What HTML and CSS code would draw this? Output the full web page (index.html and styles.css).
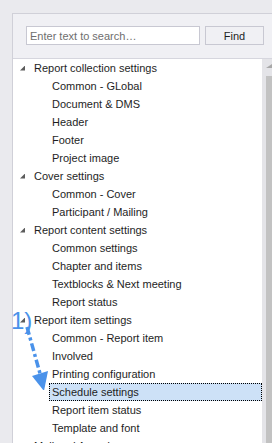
FILE: index.html
```html
<!DOCTYPE html>
<html lang="en">
<head>
  <meta charset="UTF-8" />
  <title>Settings tree</title>
  <link rel="stylesheet" href="styles.css">
</head>
<body>
  <div class="panel">
    <div class="search-bar">
      <input class="search-input" type="text" placeholder="Enter text to search…" />
      <button class="find-btn">Find</button>
    </div>

    <div class="tree-box">
      <ul class="tree">
        <li class="node group"><span class="caret"></span>Report collection settings</li>
        <li class="node child">Common - GLobal</li>
        <li class="node child">Document &amp; DMS</li>
        <li class="node child">Header</li>
        <li class="node child">Footer</li>
        <li class="node child">Project image</li>
        <li class="node group"><span class="caret"></span>Cover settings</li>
        <li class="node child">Common - Cover</li>
        <li class="node child">Participant / Mailing</li>
        <li class="node group"><span class="caret"></span>Report content settings</li>
        <li class="node child">Common settings</li>
        <li class="node child">Chapter and items</li>
        <li class="node child">Textblocks &amp; Next meeting</li>
        <li class="node child">Report status</li>
        <li class="node group"><span class="caret"></span>Report item settings</li>
        <li class="node child">Common - Report item</li>
        <li class="node child">Involved</li>
        <li class="node child">Printing configuration</li>
        <li class="node child"><span class="selected">Schedule settings</span></li>
        <li class="node child">Report item status</li>
        <li class="node child">Template and font</li>
        <li class="node group"><span class="caret"></span>Mail and Agenda</li>
      </ul>

      <div class="scrollbar">
        <div class="scroll-up"></div>
        <div class="scroll-thumb"></div>
      </div>
    </div>
  </div>

  <!-- annotation over the tree -->
  <span class="note-label">1)</span>
  <svg class="note-arrow" width="60" height="80" viewBox="0 0 60 80">
    <line x1="17" y1="17" x2="31" y2="67" stroke="#4a92ea" stroke-width="3.5"
          stroke-dasharray="8 3 3 3" />
    <polygon points="22,66 38,61 34,81" fill="#4a92ea" />
  </svg>
</body>
</html>
```

FILE: styles.css
```css
* {
  box-sizing: border-box;
  margin: 0;
  padding: 0;
}
body {
  font-family: 'Liberation Sans', Arial, sans-serif;
  font-size: 11px;
  color: #1e1e1e;
  background: #eaeaee;
  height: 443px;
  overflow: hidden;
  padding: 13px 0 0 12px;
}
.panel {
  height: 430px;
  overflow: hidden;
  background: #f0f0f4;
  border-top: 1px solid #d0d0d8;
  border-left: 1px solid #d0d0d8;
}
.search-bar {
  display: flex;
  gap: 5px;
  padding: 12px 0 13px 13px;
}
.search-input {
  width: 174px;
  height: 19px;
  border: 1px solid #c8c8d2;
  background: #fff;
  padding: 0 3px;
  font-family: inherit;
  font-size: 11px;
  outline: none;
}
.search-input::placeholder {
  color: #6e6e6e;
}
.find-btn {
  width: 59px;
  height: 19px;
  border: 1px solid #c8c8d2;
  background: #f0f0f4;
  font-family: inherit;
  font-size: 11px;
  color: #1e1e1e;
}
.tree-box {
  display: flex;
  height: 385px;
  border-top: 1px solid #d6d6de;
}
.tree {
  list-style: none;
  width: 249px;
  background: #fff;
}
.node {
  height: 18px;
  line-height: 18px;
  white-space: nowrap;
  display: flex;
  align-items: center;
}
.node.group {
  padding-left: 7px;
}
.node.child {
  padding-left: 39px;
}
.caret {
  width: 5px;
  height: 5px;
  margin-right: 9px;
  background: #5c5c5c;
  clip-path: polygon(100% 0, 100% 100%, 0 100%);
}
.selected {
  flex: 1;
  height: 18px;
  margin-left: -3px;
  padding-left: 2px;
  background: #cde1f7;
  border: 1px dotted #000;
  line-height: 16px;
}
.scrollbar {
  width: 10px;
  background: #e4e4e8;
  padding-left: 4px;
}
.scroll-up {
  width: 6px;
  height: 4px;
  margin-top: 5px;
  background: #a8a8a8;
  clip-path: polygon(100% 0, 100% 100%, 0 100%);
}
.scroll-thumb {
  width: 6px;
  height: 380px;
  margin-top: 8px;
  background: #c2c2c2;
}
.note-label {
  position: absolute;
  left: 11px;
  top: 307px;
  font-size: 24px;
  color: #4a92ea;
  font-family: 'Liberation Sans', Arial, sans-serif;
}
.note-arrow {
  position: absolute;
  left: 10px;
  top: 310px;
}
```
